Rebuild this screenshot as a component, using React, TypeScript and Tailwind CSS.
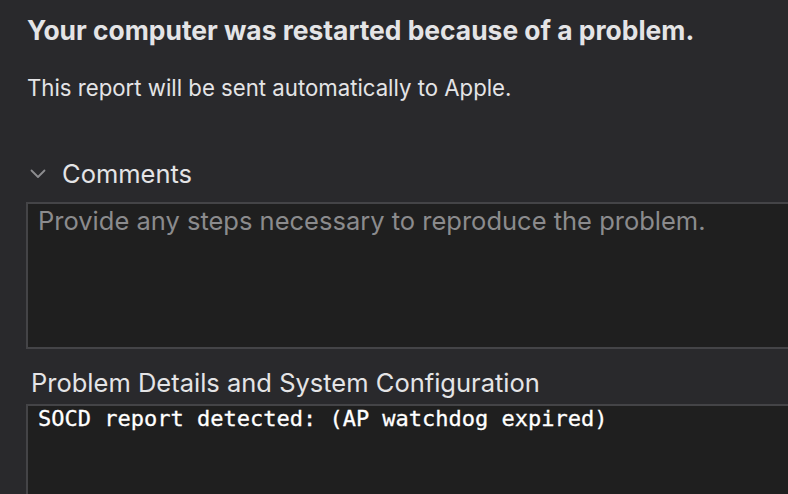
export default function App() {
  return (
    <main
      className="h-[494px] w-[788px] overflow-hidden bg-[#29292c] text-[#e4e4e6]"
      style={{ fontFamily: 'Inter, "Noto Sans", sans-serif' }}
    >
      <div className="pl-[27px] pt-[14px]">
        <h1 className="text-[26.4px] font-bold leading-[32px]">
          Your computer was restarted because of a problem.
        </h1>
        <p className="mt-[28px] text-[22.2px] leading-[28px]">
          This report will be sent automatically to Apple.
        </p>
      </div>

      <div className="mt-[56px] flex h-[32px] items-center pl-[30px]">
        <svg width="16" height="10" viewBox="0 0 16 10" className="text-[#8d8d90]">
          <path d="M1.5 1.5 L8 8 L14.5 1.5" fill="none" stroke="currentColor" strokeWidth="1.8" strokeLinecap="round" strokeLinejoin="round" />
        </svg>
        <span className="ml-[16px] text-[25.5px] leading-[32px]">Comments</span>
      </div>

      <div className="ml-[26px] mt-[12px] h-[147px] border-2 border-r-0 border-[#444447] bg-[#1f1f1f] pl-[10px] pt-[2px]">
        <p className="text-[25.5px] leading-[30px] text-[#8b8b8d]">
          Provide any steps necessary to reproduce the problem.
        </p>
      </div>

      <div className="mt-[19px] pl-[31px] text-[25.5px] leading-[30px]">
        Problem Details and System Configuration
      </div>

      <div className="ml-[26px] mt-[6px] h-[100px] border-2 border-b-0 border-r-0 border-[#444447] bg-[#1f1f1f] pl-[10px]">
        <p
          className="text-[22px] leading-[26px] text-white [-webkit-text-stroke:0.3px_white]"
          style={{ fontFamily: '"DejaVu Sans Mono", monospace' }}
        >
          SOCD report detected: (AP watchdog expired)
        </p>
      </div>
    </main>
  );
}
